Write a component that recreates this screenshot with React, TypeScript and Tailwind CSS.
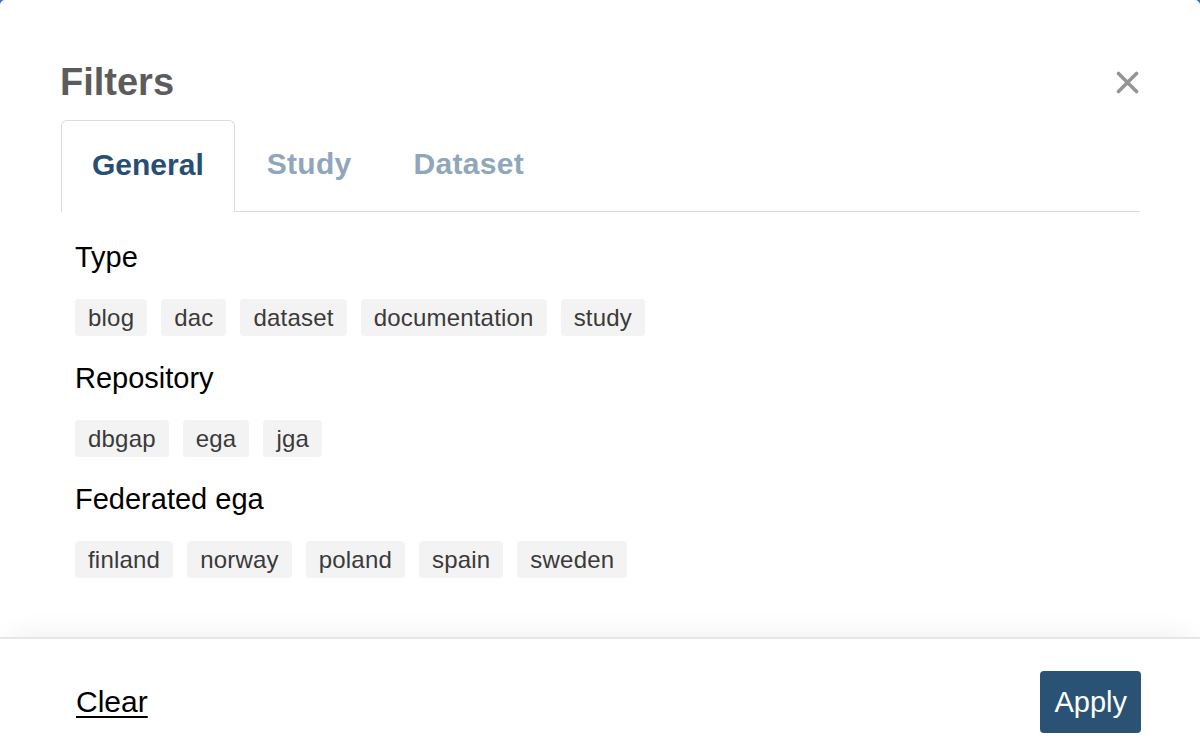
import React from 'react';

const groups = [
  { label: 'Type', items: ['blog', 'dac', 'dataset', 'documentation', 'study'] },
  { label: 'Repository', items: ['dbgap', 'ega', 'jga'] },
  { label: 'Federated ega', items: ['finland', 'norway', 'poland', 'spain', 'sweden'] },
];

const tabs = ['General', 'Study', 'Dataset'];

export default function App() {
  return (
    <div className="relative h-[756px] w-full bg-white flex flex-col overflow-hidden font-['Liberation_Sans',Arial,sans-serif]">
      {/* focus ring peeking at the corners */}
      <div className="absolute -top-[2px] -left-[2px] -right-[2px] h-[40px] border-2 border-b-0 border-[#2f6fd6] rounded-t-[7px] pointer-events-none" />

      <div className="flex-1 pt-[63px] pl-[60px] pr-[60px]">
        {/* Header */}
        <div className="flex items-center justify-between">
          <h1 className="text-[38px] leading-none font-bold text-[#5c5c5c]">Filters</h1>
          <button className="mr-[1px] text-[#959595]">
            <svg width="23" height="23" viewBox="0 0 23 23" fill="none" stroke="currentColor" strokeWidth="3.6" strokeLinecap="round">
              <path d="M2.5 2.5L20.5 20.5M20.5 2.5L2.5 20.5" />
            </svg>
          </button>
        </div>

        {/* Tabs */}
        <div className="mt-[19px] ml-[1px] flex border-b border-[#dcdcdc]">
          {tabs.map((t, i) => (
            <div
              key={t}
              className={
                i === 0
                  ? 'h-[92px] -mb-px flex items-center pb-[4px] px-[30px] border border-b-0 border-[#dcdcdc] rounded-t-[6px] bg-white text-[30px] leading-none font-bold text-[#274f74]'
                  : 'h-[91px] flex items-center pb-[4px] pl-[31px] pr-[29px] border border-transparent text-[30px] leading-none font-bold tracking-[0.3px] text-[#8fa6bb]'
              }
            >
              {t}
            </div>
          ))}
        </div>

        {/* Filter groups */}
        <div className="pl-[15px] pt-[31px] flex flex-col gap-[28px]">
          {groups.map(g => (
            <div key={g.label} className="flex flex-col gap-[27px]">
              <div className="text-[29px] leading-none text-black">{g.label}</div>
              <div className="flex gap-[14px]">
                {g.items.map(item => (
                  <span
                    key={item}
                    className="h-[37px] flex items-center px-[13px] rounded-[4px] bg-[#f3f3f3] text-[24px] leading-none tracking-[0.2px] text-[#3a3a3a]"
                  >
                    {item}
                  </span>
                ))}
              </div>
            </div>
          ))}
        </div>
      </div>

      {/* Footer */}
      <div className="h-[119px] border-t-2 border-[#e6e6e6] shadow-[0_-14px_24px_-10px_rgba(0,0,0,0.06)] flex items-start justify-between pl-[76px] pr-[59px] pt-[32px]">
        <a className="mt-[16px] text-[30px] leading-none text-black underline underline-offset-[4px] decoration-[2px]">Clear</a>
        <button className="h-[62px] px-[14px] rounded-[4px] bg-[#2a5275] text-white text-[29px] leading-none">Apply</button>
      </div>
    </div>
  );
}
